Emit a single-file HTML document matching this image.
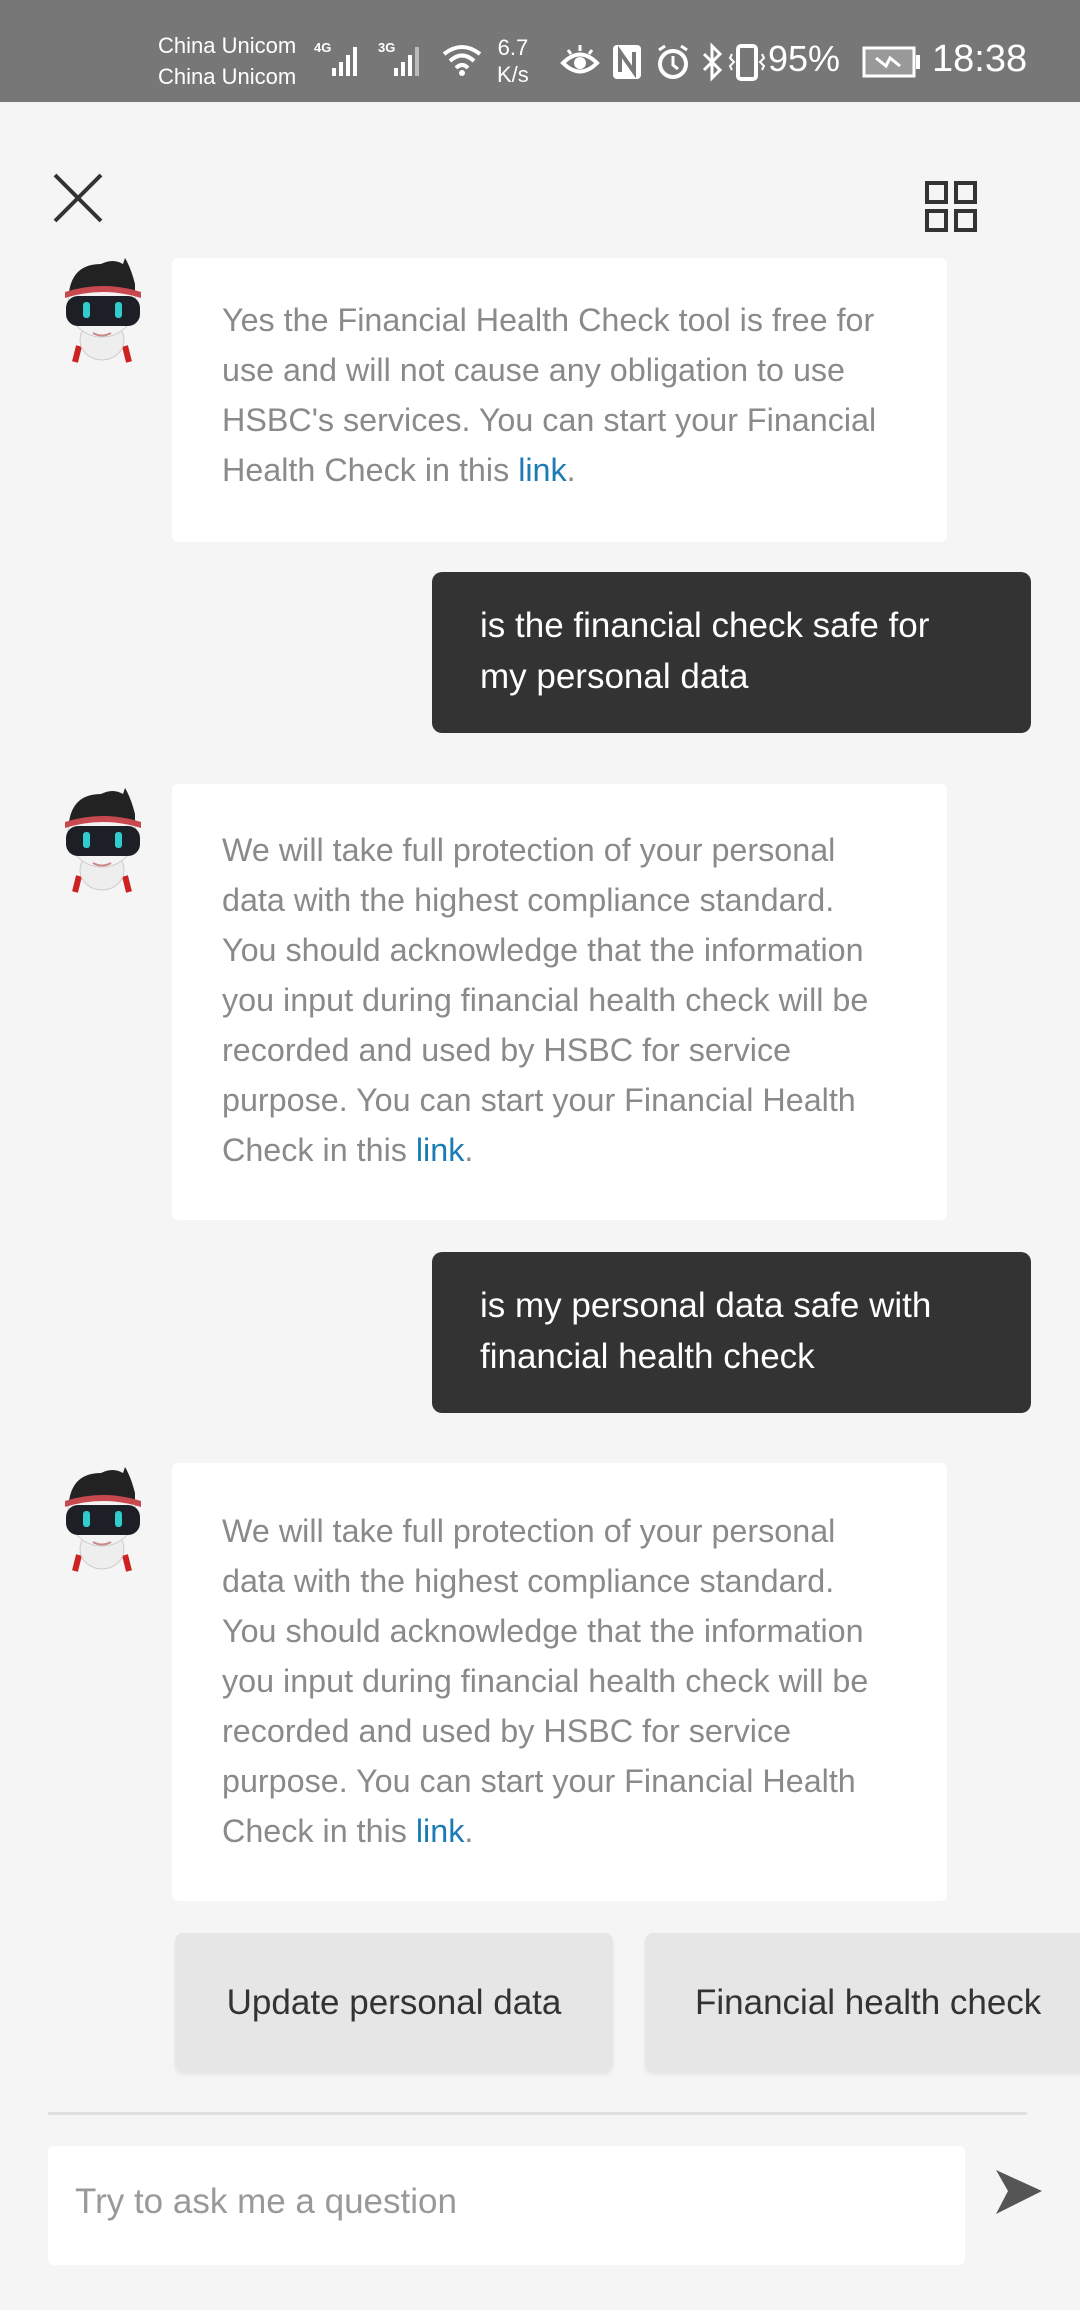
<!DOCTYPE html>
<html><head><meta charset="utf-8">
<style>
*{margin:0;padding:0;box-sizing:border-box}
body{width:1080px;height:2310px;background:#f5f5f5;font-family:"Liberation Sans",sans-serif;position:relative;overflow:hidden}
.sb{position:absolute;left:0;top:0;width:1080px;height:102px;background:#777;color:#fff}
.abs{position:absolute}
.bot{position:absolute;left:172px;width:775px;background:#fff;border-radius:6px}
.bt{position:absolute;left:50px;color:#8a8a8a;font-size:32.3px;line-height:50px;white-space:nowrap;font-weight:300}
.bt a{color:#1a7bb5;text-decoration:none}
.usr{position:absolute;left:432px;width:599px;height:161px;background:#333;border-radius:10px}
.ut{position:absolute;left:48px;top:28px;color:#fff;font-size:35px;line-height:51px;white-space:nowrap}
.btn{position:absolute;top:1933px;height:139px;background:#e6e6e6;border-radius:8px;color:#333;font-size:35px;line-height:139px;text-align:center;box-shadow:0 3px 4px rgba(0,0,0,.06)}
</style></head><body>
<div class="sb">
 <div class="abs" style="left:158px;top:30px;font-size:22px;line-height:31px">China Unicom<br>China Unicom</div>
 <div class="abs" style="left:314px;top:40px;font-size:13px;font-weight:bold">4G</div>
 <svg class="abs" style="left:330px;top:40px" width="40" height="40"><rect x="2" y="28" width="4" height="8" fill="#fff"/><rect x="9" y="22" width="4" height="14" fill="#fff"/><rect x="16" y="15" width="4" height="21" fill="#fff"/><rect x="23" y="7" width="4" height="29" fill="#fff"/></svg>
 <div class="abs" style="left:378px;top:40px;font-size:13px;font-weight:bold">3G</div>
 <svg class="abs" style="left:392px;top:40px" width="40" height="40"><rect x="2" y="28" width="4" height="8" fill="#fff"/><rect x="9" y="22" width="4" height="14" fill="#fff"/><rect x="16" y="15" width="4" height="21" fill="#fff"/><rect x="23" y="7" width="4" height="29" fill="#bbb"/></svg>
 <svg class="abs" style="left:440px;top:42px" width="44" height="36"><path d="M4 12 Q22 -2 40 12 M10 19 Q22 8 34 19 M16 26 Q22 20 28 26" stroke="#fff" stroke-width="4" fill="none"/><circle cx="22" cy="31" r="3" fill="#fff"/></svg>
 <div class="abs" style="left:497px;top:34px;font-size:22px;line-height:27px;text-align:center">6.7<br>K/s</div>
 <svg class="abs" style="left:560px;top:44px" width="40" height="36"><path d="M3 19 Q20 2 37 19 Q20 36 3 19Z" stroke="#fff" stroke-width="4" fill="none"/><circle cx="20" cy="19" r="6" fill="#fff"/><path d="M8 6 L11 10 M20 1 V7 M32 6 L29 10" stroke="#fff" stroke-width="3"/></svg>
 <svg class="abs" style="left:612px;top:44px" width="30" height="36"><rect x="1" y="1" width="28" height="34" rx="4" fill="#fff"/><path d="M8 28 V8 L22 28 V8" stroke="#777" stroke-width="4" fill="none"/></svg>
 <svg class="abs" style="left:656px;top:44px" width="34" height="36"><circle cx="17" cy="20" r="13" stroke="#fff" stroke-width="4" fill="none"/><path d="M17 12 V21 L22 25 M3 6 L9 2 M31 6 L25 2" stroke="#fff" stroke-width="3" fill="none"/></svg>
 <svg class="abs" style="left:700px;top:42px" width="24" height="40"><path d="M4 12 L20 28 L12 36 V4 L20 12 L4 28" stroke="#fff" stroke-width="3" fill="none"/></svg>
 <svg class="abs" style="left:728px;top:44px" width="38" height="38"><rect x="10" y="2" width="18" height="33" rx="3" stroke="#fff" stroke-width="4" fill="none"/><path d="M4 10 L2 14 L6 18 L2 22 L4 26 M34 10 L36 14 L32 18 L36 22 L34 26" stroke="#fff" stroke-width="2" fill="none"/></svg>
 <div class="abs" style="left:768px;top:38px;font-size:36px">95%</div>
 <svg class="abs" style="left:862px;top:46px" width="60" height="32"><rect x="2" y="2" width="50" height="28" stroke="#fff" stroke-width="3" fill="#999"/><rect x="54" y="9" width="4" height="14" fill="#fff"/><path d="M14 12 L24 20 L28 12 L38 20" stroke="#fff" stroke-width="3" fill="none"/></svg>
 <div class="abs" style="left:932px;top:38px;font-size:38px">18:38</div>
</div>

<svg class="abs" style="left:50px;top:170px" width="56" height="56"><path d="M5 5 L51 51 M51 5 L5 51" stroke="#333" stroke-width="4"/></svg>
<svg class="abs" style="left:924px;top:180px" width="56" height="54"><g stroke="#333" stroke-width="4" fill="none"><rect x="3" y="3" width="19" height="19"/><rect x="32" y="3" width="19" height="19"/><rect x="3" y="31" width="19" height="19"/><rect x="32" y="31" width="19" height="19"/></g></svg>

<svg width="0" height="0" style="position:absolute"><defs><g id="av">
 <path d="M26 88 L22 104 M72 88 L76 104" stroke="#c22" stroke-width="6"/>
 <ellipse cx="49" cy="82" rx="22" ry="20" fill="#eee" stroke="#ccc"/>
 <ellipse cx="49" cy="45" rx="34" ry="34" fill="#f3f3f3" stroke="#ccc"/>
 <path d="M16 34 Q20 6 48 6 Q60 0 70 6 L72 0 Q78 10 82 26 L82 34 Z" fill="#222"/>
 <path d="M12 34 Q50 22 88 34 L88 40 Q50 28 12 40Z" fill="#c8484f"/>
 <rect x="13" y="38" width="74" height="30" rx="12" fill="#1c1f26"/>
 <rect x="30" y="44" width="7" height="16" rx="3" fill="#3cc"/>
 <rect x="62" y="44" width="7" height="16" rx="3" fill="#3cc"/>
 <path d="M40 75 Q49 80 58 75" stroke="#c88" stroke-width="2" fill="none"/>
</g></defs></svg>
<svg class="abs" style="left:53px;top:258px" width="100" height="106"><use href="#av"/></svg>
<svg class="abs" style="left:53px;top:788px" width="100" height="106"><use href="#av"/></svg>
<svg class="abs" style="left:53px;top:1467px" width="100" height="106"><use href="#av"/></svg>

<div class="bot" style="top:258px;height:284px">
 <div class="bt" style="top:37px">Yes the Financial Health Check tool is free for<br>use and will not cause any obligation to use<br>HSBC's services. You can start your Financial<br>Health Check in this <a>link</a>.</div>
</div>
<div class="usr" style="top:572px"><div class="ut">is the financial check safe for<br>my personal data</div></div>

<div class="bot" style="top:784px;height:436px">
 <div class="bt" style="top:41px">We will take full protection of your personal<br>data with the highest compliance standard.<br>You should acknowledge that the information<br>you input during financial health check will be<br>recorded and used by HSBC for service<br>purpose. You can start your Financial Health<br>Check in this <a>link</a>.</div>
</div>
<div class="usr" style="top:1252px"><div class="ut">is my personal data safe with<br>financial health check</div></div>

<div class="bot" style="top:1463px;height:438px">
 <div class="bt" style="top:43px">We will take full protection of your personal<br>data with the highest compliance standard.<br>You should acknowledge that the information<br>you input during financial health check will be<br>recorded and used by HSBC for service<br>purpose. You can start your Financial Health<br>Check in this <a>link</a>.</div>
</div>

<div class="btn" style="left:175px;width:438px">Update personal data</div>
<div class="btn" style="left:645px;width:460px;text-align:left;padding-left:50px">Financial health check</div>

<div class="abs" style="left:48px;top:2112px;width:979px;height:3px;background:#e0e0e0"></div>
<div class="abs" style="left:48px;top:2146px;width:917px;height:119px;background:#fff;border-radius:6px"></div>
<div class="abs" style="left:75px;top:2182px;font-size:35px;color:#999;font-weight:300">Try to ask me a question</div>
<svg class="abs" style="left:994px;top:2168px" width="50" height="50"><path d="M2 2 L48 23 L2 46 L14 23Z" fill="#555"/></svg>
</body></html>
